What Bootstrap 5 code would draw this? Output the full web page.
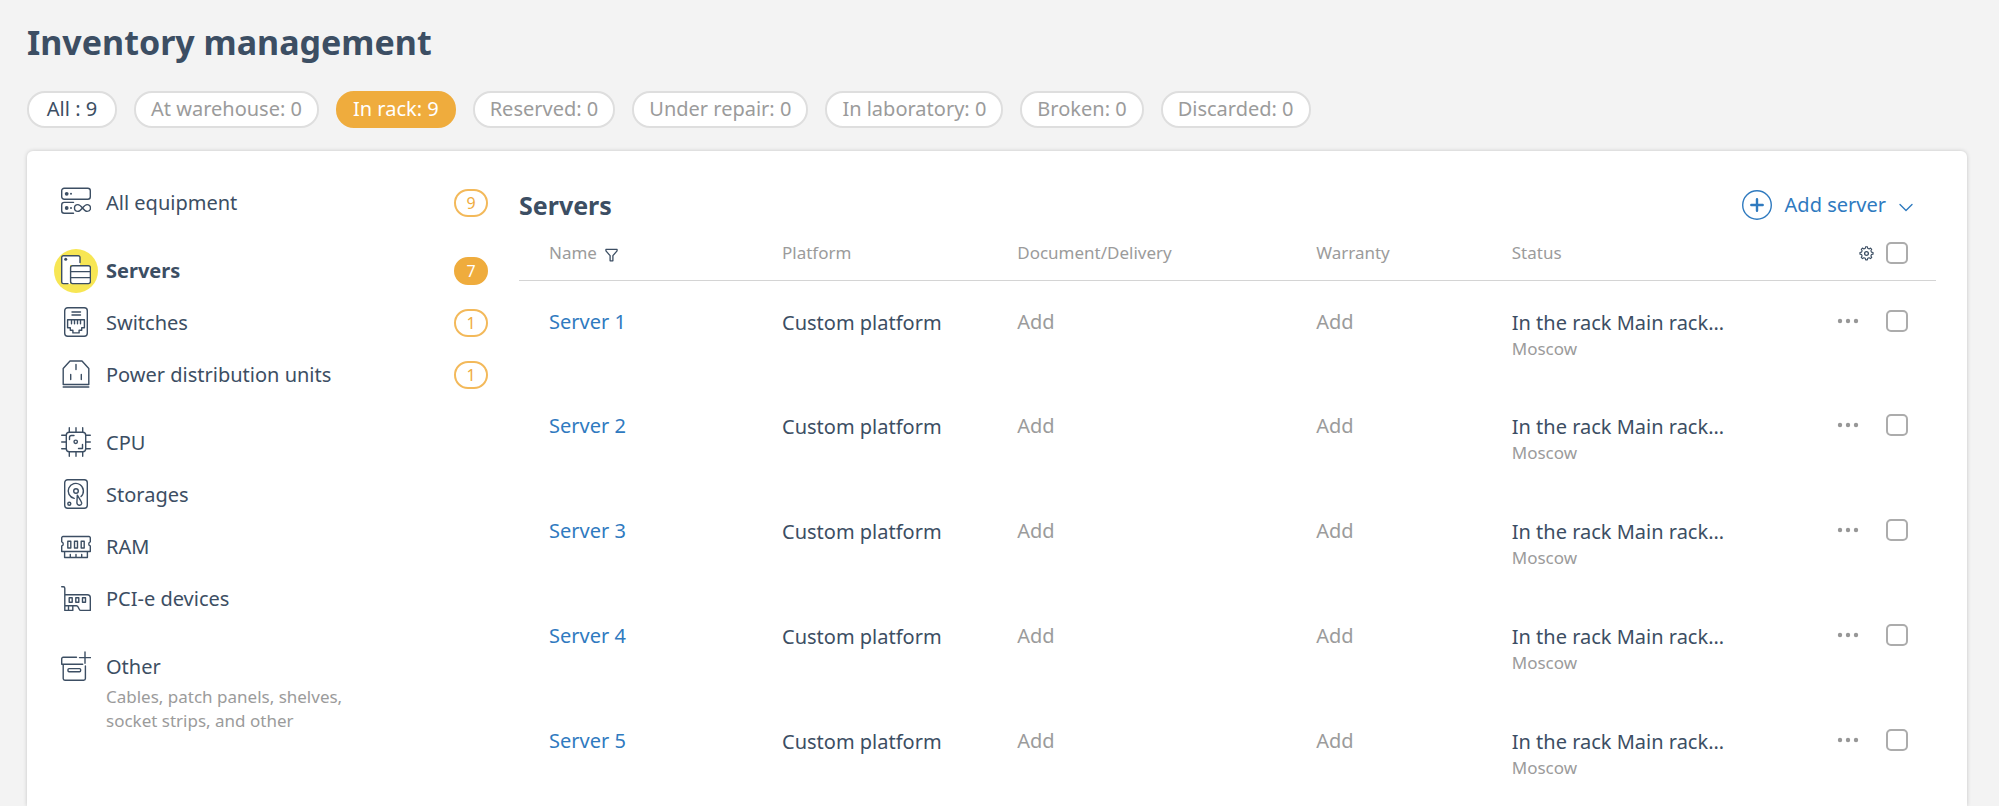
<!DOCTYPE html>
<html lang="en">
<head>
<meta charset="utf-8">
<meta name="viewport" content="width=device-width, initial-scale=1">
<title>Inventory management</title>
<link href="https://cdn.jsdelivr.net/npm/bootstrap@5.3.0/dist/css/bootstrap.min.css" rel="stylesheet">
<style>
  :root { --ink: #3c4e63; --muted: #9b9b9b; --accent: #efac3d; --link: #2f7abf; }
  body { background: #f3f3f3; color: var(--ink); font-family: "Noto Sans", "Open Sans", sans-serif; font-size: 20px; line-height: 28px; }
  .page { min-height: 100vh; padding: 19px 32px 0 27px; }
  .page-title { font-size: 34px; line-height: 46px; font-weight: 700; margin-bottom: 26px; }
  .filters { gap: 17px; margin-bottom: 23px; }
  .pill { min-width: 90px; background: #fff; border: 2px solid #dedede; color: var(--muted); border-radius: 18px; padding: 0 15px 1px; font-size: 20px; line-height: 32px; }
  .pill-all { color: var(--ink); }
  .pill.active { background: var(--accent); border-color: var(--accent); color: #fff; }
  .panel { background: #fff; border-radius: 6px 6px 0 0; box-shadow: 0 0 4px rgba(0, 0, 0, .18); padding: 26px 31px 0 27px; gap: 31px; }
  .sidebar { width: 434px; gap: 16px; }
  .side-link { color: var(--ink); text-decoration: none; padding: 4px 0; gap: 8px; }
  .side-icon { width: 44px; height: 44px; padding-bottom: 2px; border-radius: 50%; }
  .side-label { padding-top: 8px; }
  .side-note { color: var(--muted); font-size: 17px; line-height: 24px; margin-top: 4px; max-width: 260px; }
  .side-link.active { font-weight: 700; }
  .side-link.active .side-icon { background: #f7e654; }
  .count { width: 34px; height: 28px; margin-top: 8px; border: 2px solid #f3b95a; border-radius: 14px; color: var(--accent); font-size: 16px; line-height: 24px; text-align: center; font-weight: 400; }
  .side-link.active .count { background: var(--accent); border-color: var(--accent); color: #fff; }
  .line-icon { fill: none; stroke: currentColor; stroke-width: 1.4; stroke-linecap: round; stroke-linejoin: round; }
  .line-icon .solid { fill: currentColor; stroke: none; }
  .section-head { height: 52px; margin-top: 2px; padding-right: 23px; }
  .section-title { font-size: 25px; line-height: 32px; font-weight: 700; }
  .plain { border: 0; background: none; padding: 0; color: var(--ink); }
  .add-btn { color: var(--link); font-size: 20px; line-height: 28px; gap: 13px; }
  .servers { table-layout: fixed; width: 100%; }
  .servers th { height: 49px; padding: 0 0 4px; font-size: 17px; line-height: 24px; font-weight: 400; color: var(--muted); border-bottom: 1px solid #d4d4d4; vertical-align: middle; }
  .servers td { height: 105px; padding: 27px 0 0; vertical-align: top; }
  .servers .text-cell { padding-top: 28px; }
  .servers th:first-child, .servers td:first-child { padding-left: 30px; }
  .servers th:last-child, .servers td:last-child { padding-right: 28px; }
  .name-col { width: 263px; } .platform-col { width: 16.6%; } .doc-col { width: 21.1%; } .warranty-col { width: 13.8%; } .action-col { width: 126px; }
  .name-link { color: var(--link); text-decoration: none; }
  .add-link, .place { color: var(--muted); text-decoration: none; }
  .place { font-size: 17px; line-height: 24px; }
  .actions { height: 26px; gap: 27px; }
  .actions-head { gap: 12px; }
  .tick.form-check-input { width: 22px; height: 22px; margin: 0; border: 2px solid #acacac; border-radius: 5px; }
</style>
</head>
<body>
<div class="page d-flex flex-column">
  <h1 class="page-title">Inventory management</h1>
  <div class="filters d-flex flex-wrap">
    <button type="button" class="pill pill-all">All : 9</button>
    <button type="button" class="pill">At warehouse: 0</button>
    <button type="button" class="pill active">In rack: 9</button>
    <button type="button" class="pill">Reserved: 0</button>
    <button type="button" class="pill">Under repair: 0</button>
    <button type="button" class="pill">In laboratory: 0</button>
    <button type="button" class="pill">Broken: 0</button>
    <button type="button" class="pill">Discarded: 0</button>
  </div>

  <div class="panel d-flex flex-grow-1">
    <nav class="sidebar d-flex flex-column flex-shrink-0" aria-label="Equipment">
      <div>
        <a href="#" class="side-link d-flex align-items-start">
          <span class="side-icon d-flex align-items-center justify-content-center">
            <svg class="line-icon" width="30" height="30" viewBox="0 0 30 30"><rect x=".7" y="1.3" width="28.6" height="11" rx="2.5"/><circle class="solid" cx="5.7" cy="6.8" r="1.9"/><circle class="solid" cx="10" cy="6.8" r="1"/><path d="M12.5 15.4H3.2a2.5 2.5 0 0 0-2.5 2.5v5.9a2.5 2.5 0 0 0 2.5 2.5h9.3"/><circle class="solid" cx="5.7" cy="21" r="1.9"/><circle class="solid" cx="10" cy="21" r="1"/><path d="M21.5 21c-1.6-2-2.8-3.4-4.6-3.4a3.4 3.4 0 0 0 0 6.8c1.8 0 3-1.4 4.6-3.4s2.8-3.4 4.6-3.4a3.4 3.4 0 0 1 0 6.8c-1.8 0-3-1.4-4.6-3.4z"/></svg>
          </span>
          <span class="side-label flex-grow-1">All equipment</span>
          <span class="count">9</span>
        </a>
      </div>
      <div>
        <a href="#" class="side-link active d-flex align-items-start" aria-current="page">
          <span class="side-icon d-flex align-items-center justify-content-center">
            <svg class="line-icon" width="30" height="30" viewBox="0 0 30 30"><path style="fill:#fff;stroke:none" d="M1 1h18v9H9v19H1z"/><path d="M7 28.6H2.4A1.7 1.7 0 0 1 .7 26.9V2.4A1.7 1.7 0 0 1 2.4.7h14.9A1.7 1.7 0 0 1 19 2.4v5.2"/><circle class="solid" cx="4.7" cy="4.3" r="1.5"/><rect x="9.6" y="10.8" width="19.8" height="17.8" rx="2" fill="#fff"/><path d="M9.6 16.6h19.8M9.6 22.6h19.8"/></svg>
          </span>
          <span class="side-label flex-grow-1">Servers</span>
          <span class="count">7</span>
        </a>
        <a href="#" class="side-link d-flex align-items-start">
          <span class="side-icon d-flex align-items-center justify-content-center">
            <svg class="line-icon" width="30" height="30" viewBox="0 0 30 30"><rect x="3.7" y=".7" width="22.6" height="28.6" rx="3"/><path d="M11 5h8.500M11 8h8.500M6.600 12.700h16.800v8h-2.700v2.600h-2.600v2.600h-6.200v-2.600H9.300v-2.600H6.600zM10.500 12.700v4M13.500 12.700v4M16.500 12.700v4M19.500 12.700v4"/></svg>
          </span>
          <span class="side-label flex-grow-1">Switches</span>
          <span class="count">1</span>
        </a>
        <a href="#" class="side-link d-flex align-items-start">
          <span class="side-icon d-flex align-items-center justify-content-center">
            <svg class="line-icon" width="30" height="30" viewBox="0 0 30 30"><path d="M2.200 25.500V9.500L9 2h12l6.800 7.500v16zM2.200 28h25.600M15 5.500v5M9.700 15.500v5M20.300 15.500v5"/></svg>
          </span>
          <span class="side-label flex-grow-1">Power distribution units</span>
          <span class="count">1</span>
        </a>
      </div>
      <div>
        <a href="#" class="side-link d-flex align-items-start">
          <span class="side-icon d-flex align-items-center justify-content-center">
            <svg class="line-icon" width="30" height="30" viewBox="0 0 30 30"><rect x="5.300" y="5.300" width="19.400" height="19.400" rx="3"/><path d="M8.300.7v4.600M15 .7v4.600M21.700.7v4.600M8.300 24.700v4.600M15 24.700v4.600M21.700 24.700v4.600M.7 8.300h4.600M.7 15h4.600M.7 21.700h4.600M24.700 8.300h4.600M24.700 15h4.600M24.700 21.700h4.600M8.500 12.500v-2a2 2 0 0 1 2-2h2.500M17.500 21.500h4v-4"/><circle cx="14.700" cy="14.800" r="1.700"/></svg>
          </span>
          <span class="side-label">CPU</span>
        </a>
        <a href="#" class="side-link d-flex align-items-start">
          <span class="side-icon d-flex align-items-center justify-content-center">
            <svg class="line-icon" width="30" height="30" viewBox="0 0 30 30"><rect x="3.700" y=".7" width="22.600" height="28.600" rx="3"/><path d="M13.200 19.400A7.600 7.600 0 1 1 20 17.500M16.300 16.200l-.4 7.300c0 3.200 4.300 3.700 4.800.9.200-1.400-2.200-4.800-4.400-8.200z"/><circle cx="15" cy="12" r="2.300"/><circle cx="8.300" cy="24.800" r="1.500"/></svg>
          </span>
          <span class="side-label">Storages</span>
        </a>
        <a href="#" class="side-link d-flex align-items-start">
          <span class="side-icon d-flex align-items-center justify-content-center">
            <svg class="line-icon" width="30" height="30" viewBox="0 0 30 30"><path d="M2 5.500h26a1.300 1.300 0 0 1 1.300 1.300v4a2.200 2.200 0 0 0 0 4.200v5.500H.7V15a2.200 2.200 0 0 0 0-4.200v-4A1.300 1.300 0 0 1 2 5.500zM3.600 20.500v6h22.800v-6M9.300 23.500v3M15 23.500v3M20.700 23.500v3M6.800 10.300h3v6.700h-3zM13.500 10.300h3v6.700h-3zM20.200 10.300h3v6.700h-3z"/></svg>
          </span>
          <span class="side-label">RAM</span>
        </a>
        <a href="#" class="side-link d-flex align-items-start">
          <span class="side-icon d-flex align-items-center justify-content-center">
            <svg class="line-icon" width="30" height="30" viewBox="0 0 30 30"><path d="M.7 3.700h1.600a1.500 1.500 0 0 1 1.500 1.500v22.200h8v-4.600M3.800 11.700h22.500a3 3 0 0 1 3 3v12.700H19.500c-2 0-1.500-4.600-4-4.600H3.800M7.500 24v3.400M8.200 14.700h3v4.600h-3zM14.800 14.700h3v4.600h-3zM21.500 14.700h3v4.600h-3z"/></svg>
          </span>
          <span class="side-label">PCI-e devices</span>
        </a>
      </div>
      <div>
        <a href="#" class="side-link d-flex align-items-start">
          <span class="side-icon d-flex align-items-center justify-content-center">
            <svg class="line-icon" width="30" height="30" viewBox="0 0 30 30"><path d="M15.500 6.300H2.200A1.500 1.500 0 0 0 .7 7.800v5.500h21M2.200 13.500v14a1.700 1.700 0 0 0 1.700 1.700h18.800a1.700 1.700 0 0 0 1.700-1.700V15M18.500 6.600h11M24 1v11.300"/><rect x="7" y="17.600" width="12.600" height="3.200" rx="1"/></svg>
          </span>
          <span class="side-label">Other<span class="side-note d-block">Cables, patch panels, shelves, socket strips, and other</span></span>
        </a>
      </div>
    </nav>

    <main class="flex-grow-1">
      <div class="section-head d-flex align-items-center justify-content-between">
        <h2 class="section-title mb-0">Servers</h2>
        <button type="button" class="plain add-btn d-flex align-items-center">
          <svg class="line-icon" width="30" height="30" viewBox="0 0 30 30"><circle cx="15" cy="15" r="14.300"/><path stroke="currentColor" style="stroke-width:2.4" d="M15 9.300v11.400M9.300 15h11.400"/></svg>
          Add server
          <svg class="line-icon mt-1" width="14" height="9" viewBox="0 0 14 9"><path d="M1 1.500l6 6 6-6"/></svg>
        </button>
      </div>
      <table class="servers">
        <colgroup><col class="name-col"><col class="platform-col"><col class="doc-col"><col class="warranty-col"><col><col class="action-col"></colgroup>
        <thead>
          <tr>
            <th scope="col">Name <button type="button" class="plain ms-1" aria-label="Filter by name"><svg class="line-icon" width="13" height="14" viewBox="0 0 14 14"><path d="M1 1h12v1.500L8.500 7.700v5.600H5.500V7.700L1 2.500z"/></svg></button></th>
            <th scope="col">Platform</th>
            <th scope="col">Document/Delivery</th>
            <th scope="col">Warranty</th>
            <th scope="col">Status</th>
            <th scope="col"><div class="actions-head d-flex align-items-center justify-content-end"><button type="button" class="plain d-flex" aria-label="Table settings"><svg class="line-icon" width="15" height="15" viewBox="0 0 16 16"><path style="stroke-width:1.2" d="M6.700 2.500L7.100.8h1.800l.4 1.700 1.500.6 1.500-.9 1.300 1.300-.9 1.500.6 1.500 1.700.4v1.800l-1.700.4-.6 1.500.9 1.500-1.300 1.300-1.500-.9-1.500.6-.4 1.700H7.100l-.4-1.700-1.500-.6-1.500.9-1.300-1.300.9-1.500-.6-1.500L1 8.700V6.900l1.700-.4.6-1.500-.9-1.500 1.300-1.300 1.500.9z"/><circle cx="8" cy="7.900" r="2"/></svg></button><input type="checkbox" class="tick form-check-input" aria-label="Select all servers"></div></th>
          </tr>
        </thead>
        <tbody id="rows"></tbody>
      </table>
    </main>
  </div>
</div>
<script src="https://cdn.jsdelivr.net/npm/bootstrap@5.3.0/dist/js/bootstrap.bundle.min.js"></script>
<script>
  const servers = ['Server 1', 'Server 2', 'Server 3', 'Server 4', 'Server 5'];
  document.getElementById('rows').innerHTML = servers.map(name => `
    <tr>
      <td><a href="#" class="name-link">${name}</a></td>
      <td class="text-cell">Custom platform</td>
      <td><a href="#" class="add-link">Add</a></td>
      <td><a href="#" class="add-link">Add</a></td>
      <td class="text-cell">In the rack Main rack…<div class="place">Moscow</div></td>
      <td><div class="actions d-flex align-items-center justify-content-end">
        <button type="button" class="plain d-flex" aria-label="Actions for ${name}"><svg width="22" height="6" viewBox="0 0 22 6" fill="#979797"><circle cx="3" cy="3" r="2.200"/><circle cx="11" cy="3" r="2.200"/><circle cx="19" cy="3" r="2.200"/></svg></button>
        <input type="checkbox" class="tick form-check-input" aria-label="Select ${name}">
      </div></td>
    </tr>`).join('');
</script>
</body>
</html>
